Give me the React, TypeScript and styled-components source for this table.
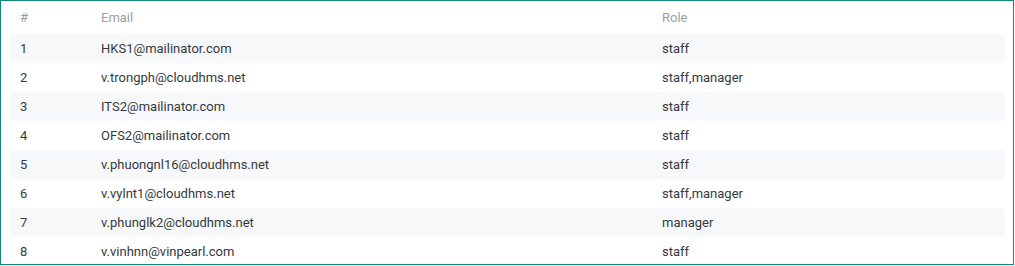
import styled, { createGlobalStyle } from "styled-components";

const GlobalStyle = createGlobalStyle`
  html, body {
    margin: 0;
    padding: 0;
    background: #fff;
  }
`;

type User = { email: string; role: string };

const users: User[] = [
  { email: "HKS1@mailinator.com", role: "staff" },
  { email: "v.trongph@cloudhms.net", role: "staff,manager" },
  { email: "ITS2@mailinator.com", role: "staff" },
  { email: "OFS2@mailinator.com", role: "staff" },
  { email: "v.phuongnl16@cloudhms.net", role: "staff" },
  { email: "v.vylnt1@cloudhms.net", role: "staff,manager" },
  { email: "v.phunglk2@cloudhms.net", role: "manager" },
  { email: "v.vinhnn@vinpearl.com", role: "staff" },
];

export default function App() {
  return (
    <>
      <GlobalStyle />
      <Panel>
        <Table>
          <colgroup>
            <col style={{ width: 81 }} />
            <col style={{ width: 561 }} />
            <col />
          </colgroup>
          <thead>
            <tr>
              <HeadCell>#</HeadCell>
              <HeadCell>Email</HeadCell>
              <HeadCell>Role</HeadCell>
            </tr>
          </thead>
          <tbody>
            {users.map((u, i) => (
              <Row key={u.email} $striped={i % 2 === 0}>
                <Cell>{i + 1}</Cell>
                <Cell>{u.email}</Cell>
                <Cell>{u.role}</Cell>
              </Row>
            ))}
          </tbody>
        </Table>
      </Panel>
    </>
  );
}

const Panel = styled.div`
  box-sizing: border-box;
  width: 1014px;
  height: 265px;
  border: 1px solid #0e877d;
  padding: 0 8px 0 9px;
  overflow: hidden;
  font-family: Roboto, "Noto Sans", sans-serif;
  font-size: 13px;
`;

const Table = styled.table`
  width: 100%;
  border-collapse: separate;
  border-spacing: 0;
  table-layout: fixed;
`;

const HeadCell = styled.th`
  height: 33px;
  padding: 0 10px;
  text-align: left;
  font-weight: 400;
  color: #9a9ea4;
  vertical-align: middle;
`;

const Row = styled.tr<{ $striped: boolean }>`
  background: ${(p) => (p.$striped ? "#f7f8fa" : "transparent")};

  td:first-child {
    border-radius: 4px 0 0 4px;
  }
  td:last-child {
    border-radius: 0 4px 4px 0;
  }
`;

const Cell = styled.td`
  height: 29px;
  padding: 0 10px;
  color: #343a40;
  vertical-align: middle;
  white-space: nowrap;
`;
